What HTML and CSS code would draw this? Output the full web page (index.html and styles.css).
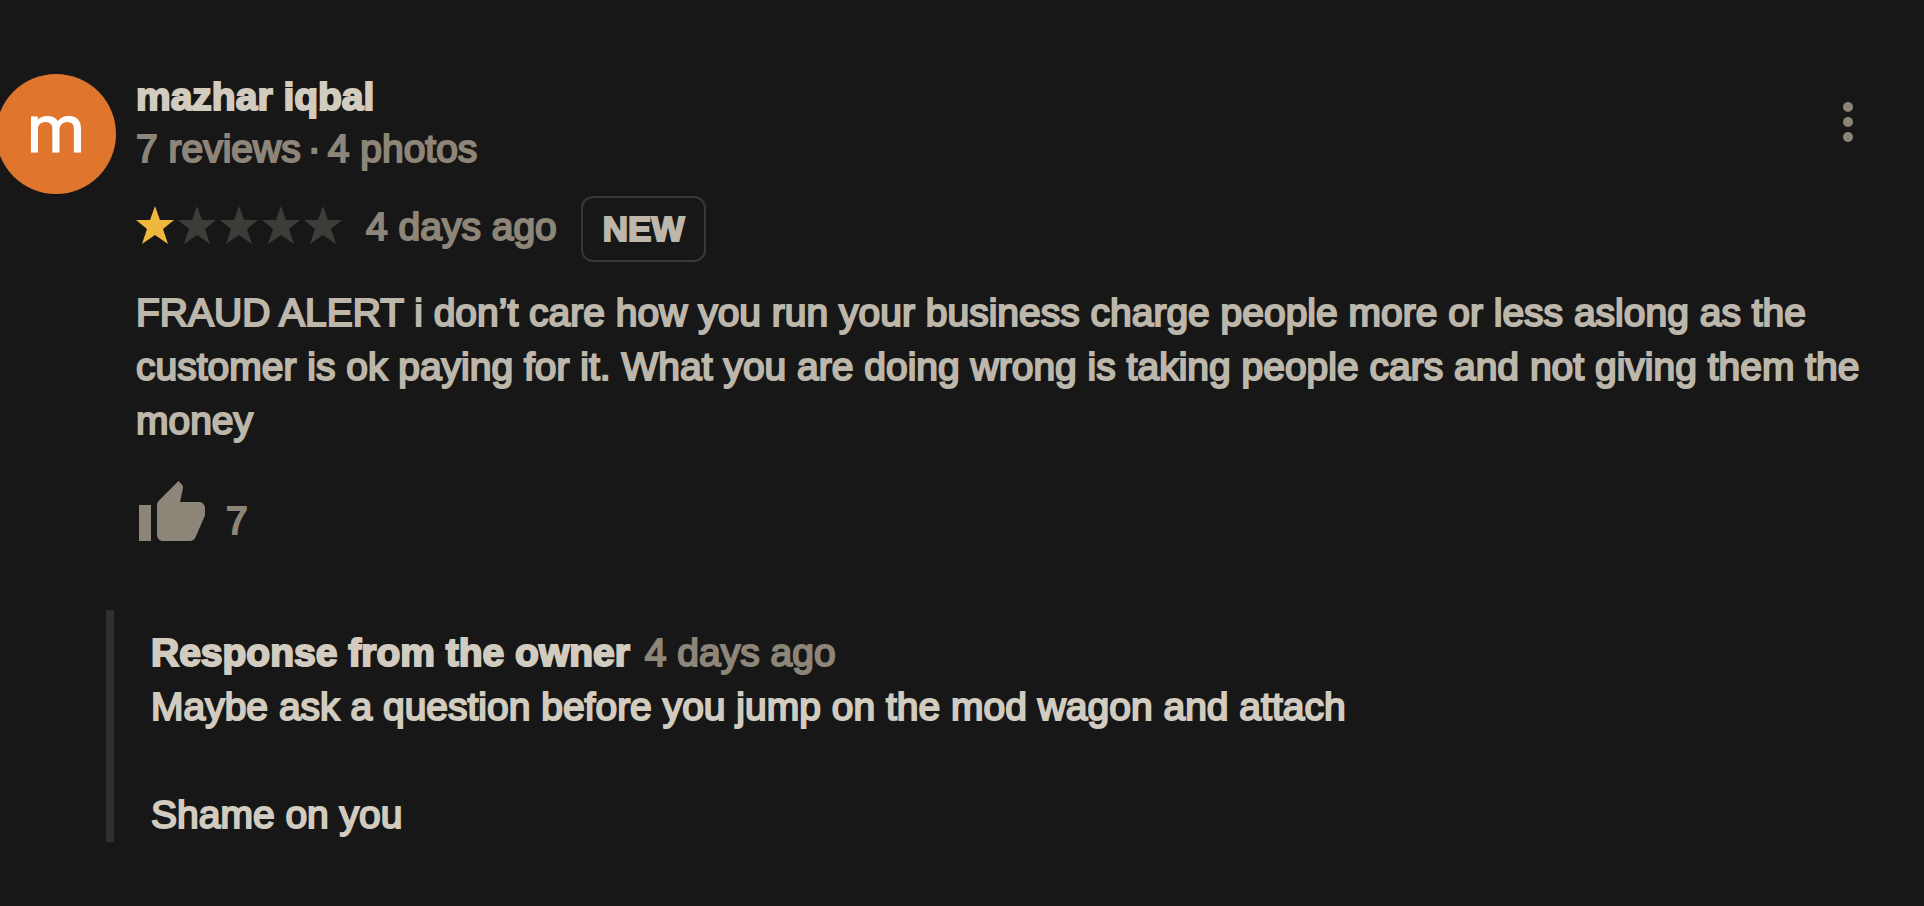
FILE: index.html
```html
<!DOCTYPE html>
<html lang="en">
<head>
	<meta charset="utf-8">
	<meta name="viewport" content="width=device-width, initial-scale=1">
	<title>Reviews</title>
	<link rel="stylesheet" href="styles.css">
</head>
<body>
	<div class="review">
		<div class="avatar">m</div>
		<div class="content">
			<div class="header">
				<div class="author">
					<div class="name">mazhar iqbal</div>
					<div class="stats">7 reviews<span class="dot">·</span>4 photos</div>
				</div>
				<button class="menu" type="button" aria-label="Actions">
					<svg viewBox="0 0 10 40"><circle cx="5" cy="5" r="5"/><circle cx="5" cy="20" r="5"/><circle cx="5" cy="35" r="5"/></svg>
				</button>
			</div>
			<div class="rating">
				<div class="stars" role="img" aria-label="1 star">
					<svg class="star star_on" viewBox="0 0 38 38"><path d="M19 0l5 14h14L27 23l5 15-13-9-13 9 5-15L0 14h14z"/></svg>
					<svg class="star" viewBox="0 0 38 38"><path d="M19 0l5 14h14L27 23l5 15-13-9-13 9 5-15L0 14h14z"/></svg>
					<svg class="star" viewBox="0 0 38 38"><path d="M19 0l5 14h14L27 23l5 15-13-9-13 9 5-15L0 14h14z"/></svg>
					<svg class="star" viewBox="0 0 38 38"><path d="M19 0l5 14h14L27 23l5 15-13-9-13 9 5-15L0 14h14z"/></svg>
					<svg class="star" viewBox="0 0 38 38"><path d="M19 0l5 14h14L27 23l5 15-13-9-13 9 5-15L0 14h14z"/></svg>
				</div>
				<span class="date">4 days ago</span>
				<span class="badge">NEW</span>
			</div>
			<p class="text">FRAUD ALERT i don’t care how you run your business charge people more or less aslong as the customer is ok paying for it. What you are doing wrong is taking people cars and not giving them the money</p>
			<button class="like" type="button" aria-label="Like, 7">
				<svg viewBox="0 0 24 24"><path d="M1 21h4V9H1v12zm22-11c0-1.1-.9-2-2-2h-6.31l.95-4.57.03-.32c0-.41-.17-.79-.44-1.06L14.17 1 7.59 7.59C7.22 7.95 7 8.45 7 9v10c0 1.1.9 2 2 2h9c.83 0 1.54-.5 1.84-1.22l3.02-7.05c.09-.23.14-.47.14-.73v-2z"/></svg>
				<span>7</span>
			</button>
			<div class="response">
				<div><span class="owner">Response from the owner</span> <span class="date">4 days ago</span></div>
				<p class="reply">Maybe ask a question before you jump on the mod wagon and attach</p>
				<p class="reply">Shame on you</p>
			</div>
		</div>
	</div>
</body>
</html>
```
FILE: styles.css
```css
* {
	box-sizing: border-box;
}
body {
	margin: 0;
	background-color: #171717;
	color: #bdb7ab;
	font-family: "Liberation Sans", Arial, sans-serif;
	font-size: 39px;
	line-height: 54px;
	-webkit-text-stroke: 2px;
}
p {
	margin: 0;
}
button {
	padding: 0;
	border: 0;
	background: none;
	color: inherit;
	font: inherit;
	cursor: pointer;
}
svg {
	display: block;
	fill: currentColor;
}
.review {
	display: flex;
	gap: 20px;
	padding: 71px 48px 48px 0;
}
.avatar {
	display: flex;
	flex: none;
	justify-content: center;
	width: 120px;
	height: 120px;
	margin: 3px 0 0 -4px;
	border-radius: 50%;
	background-color: #e0762d;
	color: #fff;
	font-family: Roboto, sans-serif;
	font-size: 66px;
	line-height: 112px;
	-webkit-text-stroke: 1px;
}
.content {
	flex: 1;
}
.header {
	display: flex;
	justify-content: space-between;
	line-height: 52px;
}
.name, .owner {
	color: #d2cbbf;
	font-weight: bold;
}
.stats, .date, .menu, .like {
	color: #8d8578;
}
.dot {
	margin: 0 7px;
}
.menu {
	align-self: flex-start;
	margin-top: 31px;
	padding: 0 23px;
}
.menu svg {
	width: 10px;
	height: 40px;
}
.rating {
	display: flex;
	align-items: flex-start;
	gap: 24px;
	margin-top: 21px;
}
.rating .date {
	padding-top: 4px;
}
.stars {
	display: flex;
	gap: 4px;
	padding-top: 10px;
}
.star {
	width: 38px;
	height: 38px;
	color: #3c3c39;
}
.star_on {
	color: #efb73e;
}
.badge {
	padding: 4px 20px;
	border: 2px solid #383838;
	border-radius: 12px;
	font-size: 35px;
	font-weight: bold;
}
.text {
	margin-top: 24px;
}
.like {
	display: flex;
	gap: 18px;
	margin-top: 30px;
}
.like span {
	padding-top: 16px;
}
.like svg {
	width: 72px;
	height: 72px;
}
.response {
	margin: 60px 0 0 -30px;
	padding: 16px 0 0 37px;
	border-left: 8px solid #303030;
	color: #d2cbbf;
}
.owner {
	margin-right: 4px;
}
.reply + .reply {
	margin-top: 54px;
}
```
